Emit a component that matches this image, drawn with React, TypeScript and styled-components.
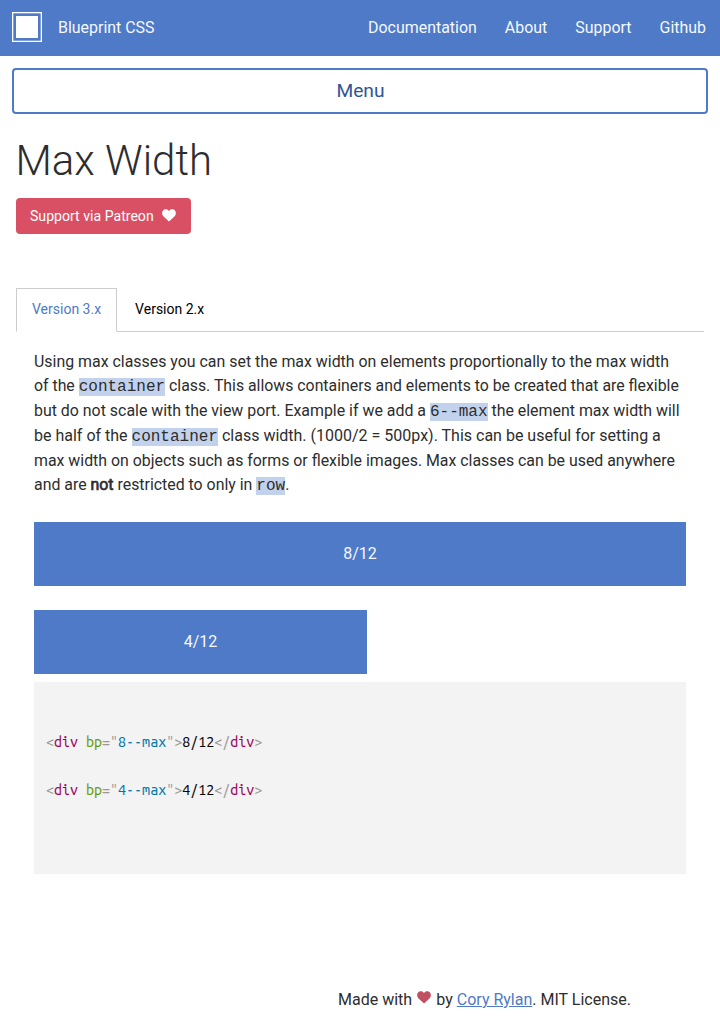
import React from "react";
import styled, { createGlobalStyle } from "styled-components";

const GlobalStyle = createGlobalStyle`
  *, *::before, *::after { box-sizing: border-box; }
  body {
    margin: 0;
    background: #fff;
    color: #2d2d2d;
    font: 400 16px/24px Roboto, sans-serif;
  }
`;

const Page = styled.div`
  height: 1024px;
  overflow: hidden;
`;

const Header = styled.header`
  display: flex;
  align-items: center;
  justify-content: space-between;
  height: 56px;
  padding: 0 14px 0 12px;
  background: #4f7ac7;
  color: #f5f8fd;
  font-size: 15.95px;
`;

const Brand = styled.a`
  display: flex;
  align-items: center;
  gap: 16px;
`;

const Logo = styled.svg`
  display: block;
  margin-bottom: 2px;
`;

const Nav = styled.nav`
  display: flex;
  gap: 28px;
`;

const MenuButton = styled.button`
  display: block;
  width: 696px;
  height: 46px;
  margin: 12px 12px 0;
  padding: 0 0 0 1px;
  border: 2px solid #4f7ac7;
  border-radius: 4px;
  background: #fff;
  color: #2f5597;
  font: 400 19.2px/42px Roboto, sans-serif;
`;

const Main = styled.main`
  padding: 17px 16px 0;
`;

const Title = styled.h1`
  margin: 0;
  font-size: 42px;
  font-weight: 300;
  line-height: 60px;
  text-indent: -0.5px;
`;

const PatreonLink = styled.a`
  display: flex;
  align-items: center;
  gap: 8px;
  width: 175px;
  height: 36px;
  margin-top: 7px;
  padding: 0 14px;
  border-radius: 4px;
  background: #d94f63;
  color: #fff;
  font-size: 14.1px;
`;

const HeartSvg = styled.svg`
  display: inline-block;
  fill: currentColor;
`;

const TabList = styled.div`
  display: flex;
  height: 44px;
  margin-top: 54px;
  border-bottom: 1px solid #ccc;
`;

const Tab = styled.button<{ $active?: boolean }>`
  height: 44px;
  padding: 0 15px 3px;
  border: 1px solid ${(p) => (p.$active ? "#ccc" : "transparent")};
  border-bottom-color: ${(p) => (p.$active ? "#fff" : "transparent")};
  background: ${(p) => (p.$active ? "#fff" : "transparent")};
  color: ${(p) => (p.$active ? "#4f7ac7" : "#000")};
  font: 400 14px/20px Roboto, sans-serif;
  & + & { margin-left: 2px; }
`;

const Panel = styled.section`
  padding: 17.68px 18px 0;
`;

const Copy = styled.p`
  margin: 0 0 23.82px;
  line-height: 24.75px;
`;

const Line = styled.span<{ $size: number }>`
  display: block;
  height: 24.75px;
  white-space: nowrap;
  font-size: ${(p) => p.$size}px;
`;

const Code = styled.code`
  background: #c2d1ec;
  font: 400 16px "Liberation Mono", monospace;
`;

const Strong = styled.strong`
  font-weight: 400;
  -webkit-text-stroke: 0.7px currentColor;
`;

const Bar = styled.div<{ $width: string }>`
  display: flex;
  align-items: center;
  justify-content: center;
  width: ${(p) => p.$width};
  height: 64px;
  background: #4f7ac7;
  color: #f5f8fd;
  & + & { margin-top: 24px; }
`;

const CodeBlock = styled.pre`
  height: 192px;
  margin: 8px 0 0;
  padding: 48px 12px;
  background: #f3f3f3;
  color: #000;
  font: 400 14.3px/24px "Ubuntu Mono", monospace;
  -webkit-text-stroke: 0.1px;
`;

const Token = styled.span<{ $color: string }>`
  color: ${(p) => p.$color};
`;

const Footer = styled.footer`
  padding: 114px 0 0 338px;
`;

const FooterLink = styled.a`
  color: #4f7ac7;
  text-decoration: underline;
`;

const FooterHeart = styled.span`
  margin: 0 1.3px 0 1px;
  color: #c05062;
  svg { vertical-align: 1px; }
`;

const PatreonHeart = styled.span`
  display: flex;
  margin-bottom: 2px;
`;

function Heart() {
  return (
    <HeartSvg width="14" height="13" viewBox="0 0 14 13">
      <path d="M7 12.6 1.3 7.3C-.7 5.1 0 1.6 2.4.6 4.2-.1 6 .5 7 2.2 8 .5 9.8-.1 11.6.6 14 1.6 14.7 5.1 12.7 7.3Z" />
    </HeartSvg>
  );
}

function Markup({ size }: { size: number }) {
  const grey = "#999";
  return (
    <>
      <Token $color={grey}>&lt;</Token>
      <Token $color="#905">div</Token> <Token $color="#690">bp</Token>
      <Token $color={grey}>="</Token>
      <Token $color="#07a">{size}--max</Token>
      <Token $color={grey}>"&gt;</Token>
      {size}/12
      <Token $color={grey}>&lt;/</Token>
      <Token $color="#905">div</Token>
      <Token $color={grey}>&gt;</Token>
    </>
  );
}

export default function App() {
  return (
    <Page>
      <GlobalStyle />
      <Header>
        <Brand>
          <Logo width="30" height="30" viewBox="0 0 30 30">
            <rect x="0.65" y="0.65" width="28.7" height="28.7" fill="none" stroke="#fff" strokeWidth="1.3" />
            <rect x="4" y="4" width="22" height="22" fill="#fff" />
          </Logo>
          Blueprint CSS
        </Brand>
        <Nav>
          <a>Documentation</a>
          <a>About</a>
          <a>Support</a>
          <a>Github</a>
        </Nav>
      </Header>
      <MenuButton>Menu</MenuButton>
      <Main>
        <Title>Max Width</Title>
        <PatreonLink>
          Support via Patreon
          <PatreonHeart>
            <Heart />
          </PatreonHeart>
        </PatreonLink>
        <TabList>
          <Tab $active>Version 3.x</Tab>
          <Tab>Version 2.x</Tab>
        </TabList>
        <Panel>
          <Copy>
            <Line $size={15.91}>
              Using max classes you can set the max width on elements proportionally to the max width
            </Line>
            <Line $size={15.84}>
              of the <Code>container</Code> class. This allows containers and elements to be created that are flexible
            </Line>
            <Line $size={15.92}>
              but do not scale with the view port. Example if we add a <Code>6--max</Code> the element max width will
            </Line>
            <Line $size={16}>
              be half of the <Code>container</Code> class width. (1000/2 = 500px). This can be useful for setting a
            </Line>
            <Line $size={15.89}>
              max width on objects such as forms or flexible images. Max classes can be used anywhere
            </Line>
            <Line $size={15.89}>
              and are <Strong>not</Strong> restricted to only in <Code>row</Code>.
            </Line>
          </Copy>
          <Bar $width="100%">8/12</Bar>
          <Bar $width="333px">4/12</Bar>
          <CodeBlock>
            <Markup size={8} />
            {"\n\n"}
            <Markup size={4} />
          </CodeBlock>
        </Panel>
      </Main>
      <Footer>
        Made with{" "}
        <FooterHeart>
          <Heart />
        </FooterHeart>{" "}
        by <FooterLink>Cory Rylan</FooterLink>. MIT License.
      </Footer>
    </Page>
  );
}
